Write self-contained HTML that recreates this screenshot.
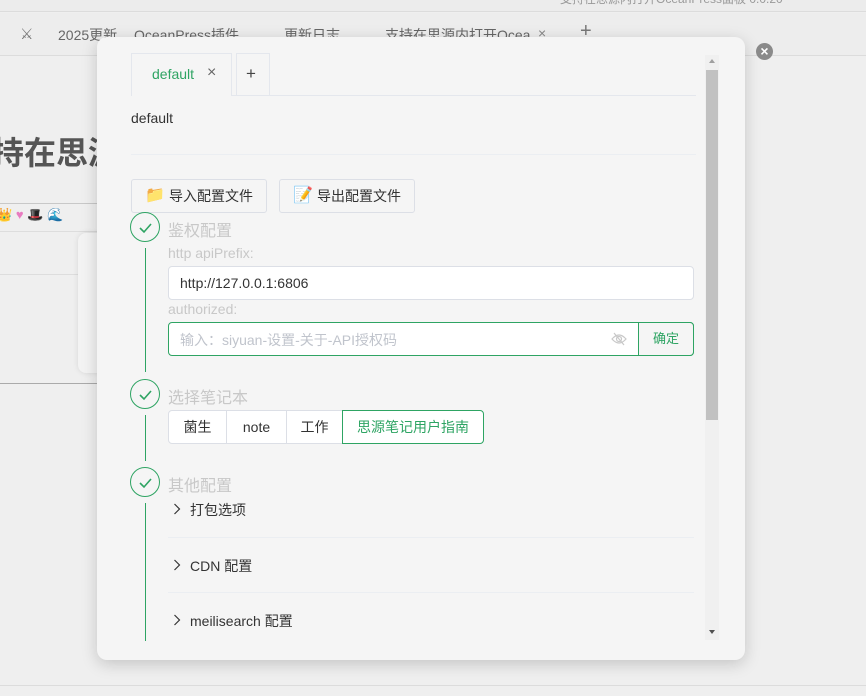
<!DOCTYPE html>
<html><head><meta charset="utf-8"><style>
*{box-sizing:border-box;margin:0;padding:0}
body{width:866px;height:696px;overflow:hidden;background:#efefef;font-family:"Liberation Sans","Noto Sans CJK SC",sans-serif;position:relative;color:#333}
.a{position:absolute}
.t{font-size:14px;white-space:nowrap}
.circle{position:absolute;width:30px;height:30px;border:1px solid #2ea463;border-radius:50%;background:#f5f5f5}
.circle svg{position:absolute;left:7px;top:7px}
.step{position:absolute;left:168px;font-size:16px;color:#c8c8c8}
.vl{position:absolute;left:145px;width:1px;background:#2ea463}
.lbl{position:absolute;left:168px;font-size:14px;color:#c8c8c8}
.btn{position:absolute;top:179px;height:34px;border:1px solid #dcdfe6;border-radius:3px;background:#f5f5f5;font-size:14px;color:#333;line-height:32px}
.seg{position:absolute;top:410px;height:34px;border:1px solid #dcdfe6;background:#fff;font-size:14px;line-height:32px;text-align:center}
.item{position:absolute;left:190px;font-size:14px;color:#333}
.chev{position:absolute;left:173px}
.div{position:absolute;left:168px;width:526px;height:1px;background:#ebeef2}
</style></head><body>
<div class="a" style="left:0;top:0;width:866px;height:12px;background:#ececec;border-bottom:1px solid #dcdcdc;overflow:hidden"><div class="a t" style="left:560px;top:-10px;font-size:12px;color:#999">支持在思源内打开OceanPress面板 0.0.20</div></div>
<div class="a" style="left:0;top:13px;width:866px;height:43px;background:#ededed;border-bottom:1px solid #dcdcdc"></div>
<div class="a t" style="left:20px;top:25px;color:#777;font-size:15px">⚔</div>
<div class="a t" style="left:58px;top:25px;color:#666">2025更新</div>
<div class="a t" style="left:134px;top:25px;color:#666">OceanPress插件</div>
<div class="a t" style="left:284px;top:25px;color:#666">更新日志</div>
<div class="a t" style="left:385px;top:25px;color:#666">支持在思源内打开Ocea</div>
<div class="a t" style="left:538px;top:25px;color:#888">×</div>
<div class="a t" style="left:580px;top:20px;color:#777;font-size:20px">+</div>
<div class="a" style="left:-8px;top:128px;font-size:32px;font-weight:bold;color:#555;white-space:nowrap">持在思源</div>
<div class="a" style="left:0;top:203px;width:100px;height:1px;background:#c8c8c8"></div>
<div class="a t" style="left:-4px;top:207px;font-size:13px">👑 <span style="color:#e87cc0">♥</span> 🎩 🌊</div>
<div class="a" style="left:0;top:231px;width:100px;height:1px;background:#ddd"></div>
<div class="a" style="left:0;top:274px;width:80px;height:1px;background:#ddd"></div>
<div class="a" style="left:78px;top:233px;width:40px;height:140px;background:#f3f3f3;border-radius:8px;box-shadow:0 0 6px rgba(0,0,0,.1)"></div>
<div class="a" style="left:0;top:383px;width:100px;height:1px;background:#aaa"></div>
<div class="a" style="left:0;top:685px;width:866px;height:1px;background:#dcdcdc"></div>

<div class="a" style="left:97px;top:37px;width:648px;height:623px;background:#f5f5f5;border-radius:10px;box-shadow:0 4px 16px rgba(0,0,0,.18)">
</div>
<div class="a" style="left:756px;top:43px;width:17px;height:17px;border-radius:50%;background:#8a8a8a;color:#fff;font-size:14px;line-height:16px;text-align:center;font-weight:bold">×</div>

<div class="a" style="left:705px;top:55px;width:14px;height:585px;background:#f0f0f0"></div>
<div class="a" style="left:706px;top:70px;width:12px;height:350px;background:#c1c1c1"></div>
<div class="a" style="left:709px;top:59px;width:0;height:0;border-left:3px solid transparent;border-right:3px solid transparent;border-bottom:4px solid #a0a0a0"></div>
<div class="a" style="left:709px;top:630px;width:0;height:0;border-left:3px solid transparent;border-right:3px solid transparent;border-top:4px solid #505050"></div>

<div class="a" style="left:131px;top:95px;width:565px;height:1px;background:#e4e7ed"></div>
<div class="a" style="left:131px;top:53px;width:101px;height:43px;border:1px solid #e4e7ed;border-bottom:none;background:#f5f5f5"></div>
<div class="a t" style="left:152px;top:66px;color:#2ea463">default</div>
<div class="a t" style="left:207px;top:64px;color:#666;font-size:16px">×</div>
<div class="a" style="left:236px;top:53px;width:34px;height:43px;border:1px solid #e4e7ed;border-bottom:none"></div>
<div class="a t" style="left:246px;top:64px;color:#444;font-size:17px">+</div>
<div class="a t" style="left:131px;top:110px;color:#333">default</div>
<div class="div" style="left:131px;top:154px;width:565px"></div>

<div class="btn" style="left:131px;width:136px"><span style="position:absolute;left:13px;top:0;color:#f7b52b;font-size:16px">📁</span><span style="position:absolute;left:37px">导入配置文件</span></div>
<div class="btn" style="left:279px;width:136px"><span style="position:absolute;left:13px;top:0;font-size:16px">📝</span><span style="position:absolute;left:37px">导出配置文件</span></div>

<div class="circle" style="left:130px;top:212px"><svg width="15" height="15" viewBox="0 0 15 15"><path d="M2 8 L6 12 L13 4" fill="none" stroke="#2ea463" stroke-width="1.6"/></svg></div>
<div class="step" style="top:217px">鉴权配置</div>
<div class="vl" style="top:248px;height:124px"></div>
<div class="lbl" style="top:245px">http apiPrefix:</div>
<div class="a" style="left:168px;top:266px;width:526px;height:34px;background:#fff;border:1px solid #dcdfe6;border-radius:4px;font-size:14px;line-height:32px;padding-left:11px;color:#333">http://127.0.0.1:6806</div>
<div class="lbl" style="top:301px">authorized:</div>
<div class="a" style="left:168px;top:322px;width:526px;height:34px;background:#fff;border:1px solid #2ea463;border-radius:4px"></div>
<div class="a t" style="left:180px;top:330px;color:#c0c4cc">输入：siyuan-设置-关于-API授权码</div>
<svg class="a" style="left:611px;top:332px" width="16" height="14" viewBox="0 0 16 14"><path d="M1 7 Q8 -1 15 7 Q8 15 1 7Z" fill="none" stroke="#c8c8c8" stroke-width="1.2"/><circle cx="8" cy="7" r="2.5" fill="none" stroke="#c8c8c8" stroke-width="1.2"/><path d="M3 1 L13 13" stroke="#c8c8c8" stroke-width="1.2"/></svg>
<div class="a" style="left:638px;top:322px;width:56px;height:34px;border:1px solid #2ea463;border-radius:0 4px 4px 0;background:#f5f5f5;color:#2ea463;font-size:13px;line-height:32px;text-align:center">确定</div>

<div class="circle" style="left:130px;top:379px"><svg width="15" height="15" viewBox="0 0 15 15"><path d="M2 8 L6 12 L13 4" fill="none" stroke="#2ea463" stroke-width="1.6"/></svg></div>
<div class="step" style="top:384px">选择笔记本</div>
<div class="vl" style="top:415px;height:46px"></div>
<div class="seg" style="left:168px;width:59px;border-radius:4px 0 0 4px">菌生</div>
<div class="seg" style="left:226px;width:61px">note</div>
<div class="seg" style="left:286px;width:57px">工作</div>
<div class="seg" style="left:342px;width:142px;border-color:#2ea463;color:#2ea463;border-radius:0 4px 4px 0">思源笔记用户指南</div>

<div class="circle" style="left:130px;top:467px"><svg width="15" height="15" viewBox="0 0 15 15"><path d="M2 8 L6 12 L13 4" fill="none" stroke="#2ea463" stroke-width="1.6"/></svg></div>
<div class="step" style="top:472px">其他配置</div>
<div class="vl" style="top:503px;height:138px"></div>
<svg class="chev" style="top:503px" width="8" height="12" viewBox="0 0 8 12"><path d="M1.5 1 L6.5 6 L1.5 11" fill="none" stroke="#333" stroke-width="1.2"/></svg>
<div class="item" style="top:500px">打包选项</div>
<div class="div" style="top:537px"></div>
<svg class="chev" style="top:559px" width="8" height="12" viewBox="0 0 8 12"><path d="M1.5 1 L6.5 6 L1.5 11" fill="none" stroke="#333" stroke-width="1.2"/></svg>
<div class="item" style="top:556px">CDN 配置</div>
<div class="div" style="top:592px"></div>
<svg class="chev" style="top:614px" width="8" height="12" viewBox="0 0 8 12"><path d="M1.5 1 L6.5 6 L1.5 11" fill="none" stroke="#333" stroke-width="1.2"/></svg>
<div class="item" style="top:611px">meilisearch 配置</div>
</body></html>
